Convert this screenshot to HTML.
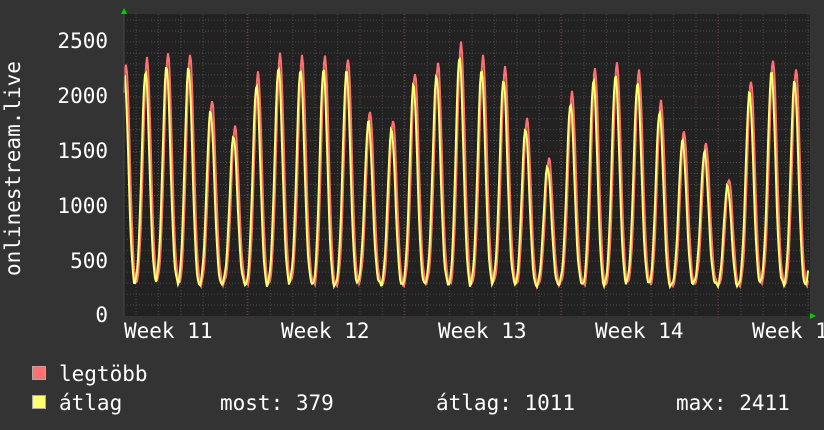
<!DOCTYPE html>
<html><head><meta charset="utf-8"><style>
html,body{margin:0;padding:0;background:#333;}
body{width:824px;height:430px;overflow:hidden;position:relative;font-family:"DejaVu Sans Mono","Liberation Mono",monospace;color:#fff;}
.t{position:absolute;font-size:21px;white-space:pre;line-height:1;}
</style></head><body>
<svg id="g" width="824" height="430" style="position:absolute;left:0;top:0">
<rect x="124" y="14" width="686" height="302" fill="#222"/>
<g id="grid"></g>
<path id="red" fill="none" stroke="#ff7070" stroke-width="2"/>
<path id="yel" fill="none" stroke="#ffff70" stroke-width="2"/>
<polygon points="121,14 127,14 124,8" fill="#0c0"/>
<polygon points="810,313 810,319 816,316" fill="#0c0"/>
<line x1="124" y1="14" x2="124" y2="316" stroke="#444"/>
</svg>
<div class="t" style="left:3px;top:276px;transform:rotate(-90deg);transform-origin:0 0;">onlinestream.live</div>
<div class="t" style="right:716px;top:31px">2500</div>
<div class="t" style="right:716px;top:86px">2000</div>
<div class="t" style="right:716px;top:141px">1500</div>
<div class="t" style="right:716px;top:196px">1000</div>
<div class="t" style="right:716px;top:251px">500</div>
<div class="t" style="right:716px;top:305px">0</div>
<div class="t" style="left:124px;top:321px">Week 11</div>
<div class="t" style="left:281px;top:321px">Week 12</div>
<div class="t" style="left:438px;top:321px">Week 13</div>
<div class="t" style="left:595px;top:321px">Week 14</div>
<div class="t" style="left:752px;top:321px">Week 15</div>
<div style="position:absolute;left:32px;top:366px;width:12px;height:12px;background:#ff7070;border:1px solid #aaa"></div>
<div style="position:absolute;left:32px;top:395px;width:12px;height:12px;background:#ffff70;border:1px solid #aaa"></div>
<div class="t" style="left:59px;top:364px">legtöbb</div>
<div class="t" style="left:59px;top:393px">átlag</div>
<div class="t" style="left:220px;top:393px">most: 379</div>
<div class="t" style="left:436px;top:393px">átlag: 1011</div>
<div class="t" style="left:676px;top:393px">max: 2411</div>
<script>
var ns="http://www.w3.org/2000/svg",g=document.getElementById("grid");
function ln(x1,y1,x2,y2,c){var l=document.createElementNS(ns,"line");l.setAttribute("x1",x1);l.setAttribute("y1",y1);l.setAttribute("x2",x2);l.setAttribute("y2",y2);l.setAttribute("stroke",c);l.setAttribute("stroke-dasharray","1,2");g.appendChild(l);}
for(var v=100;v<=2700;v+=100){var y=316-v*0.1096;if(y<14)break;ln(124,y,810,y,v%500==0?"#6a3a3a":"#4a4a4a");}
for(var x=136;x<810;x+=22.4){ln(x,14,x,316,"#4a4a4a");}
[247,404,561,718].forEach(function(x){ln(x,14,x,319,"#6a3a3a");});
var pk=[[126,2300],[147,2350],[168,2400],[190,2390],[212,1970],[235,1730],[258,2220],[280,2390],[302,2370],[325,2370],[348,2350],[370,1870],[393,1790],[415,2220],[438,2310],[461,2490],[483,2370],[505,2270],[527,1800],[549,1440],[572,2040],[595,2260],[617,2310],[639,2240],[661,1960],[684,1690],[706,1580],[729,1250],[751,2150],[773,2340],[796,2260],[818,2200]];
function val(x,k){var best=0;for(var i=0;i<pk.length;i++){var d=(x-pk[i][0])/22.4;var p=pk[i][1]*k;var f=Math.exp(-Math.pow(d/0.24,2));var base=230+(i%3)*25;best=Math.max(best,base+(p-base)*f);}return best;}
function path(k,off){var s="";for(var x=124;x<=808;x+=1){var y=316-val(x+off,k)*0.1096+Math.sin(x*1.7)*1.5;s+=(x==124?"M":"L")+x+","+y.toFixed(1);}return s;}
document.getElementById("red").setAttribute("d",path(1,0));
document.getElementById("yel").setAttribute("d",path(0.95,1.5));
</script>
</body></html>
